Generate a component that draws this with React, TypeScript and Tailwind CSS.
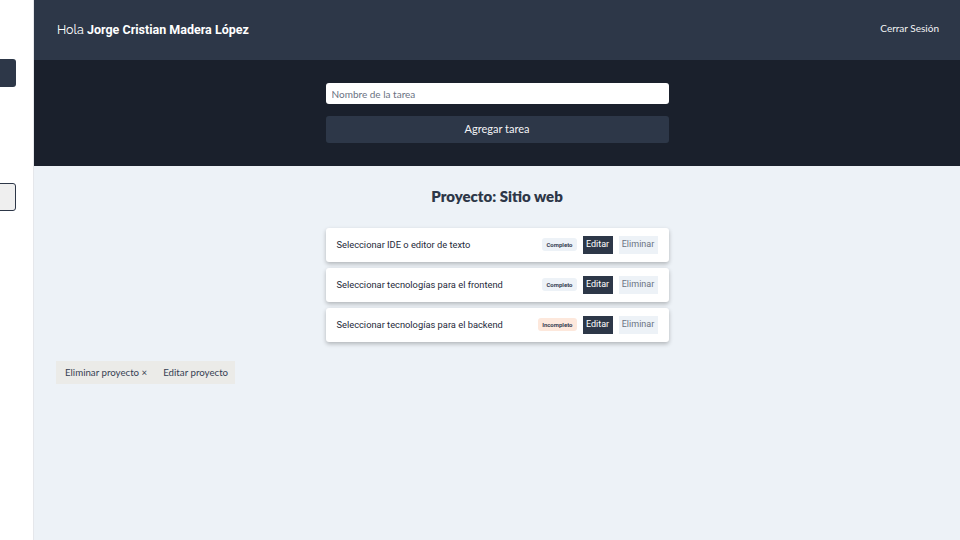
const tasks = [
  { name: "Seleccionar IDE o editor de texto", done: true },
  { name: "Seleccionar tecnologías para el frontend", done: true },
  { name: "Seleccionar tecnologías para el backend", done: false },
]

export default function App() {
  return (
    <div className="flex h-[540px] w-[960px] overflow-hidden bg-white font-['Roboto',sans-serif]">
      {/* sidebar, mostly off-screen */}
      <aside className="relative w-[34px] shrink-0 border-r border-gray-200 bg-white">
        <div className="absolute left-[-80px] top-[59px] h-[28px] w-[96px] rounded-[3px] bg-[#2d3748]" />
        <div className="absolute left-[-80px] top-[183px] h-[28px] w-[96px] rounded-[3px] border border-[#2d3748] bg-[#efefef]" />
      </aside>

      <main className="flex flex-1 flex-col bg-[#edf2f7]">
        <header className="flex h-[60px] items-center justify-between bg-[#2d3748] pl-[23px] pr-[21px] text-white">
          <p className="text-[12.5px]">
            <span className="font-['Raleway','Lato',sans-serif]">Hola </span>
            <span className="font-bold">Jorge Cristian Madera López</span>
          </p>
          <button className="mb-[3px] font-['Lato',sans-serif] text-[10px] text-gray-100">Cerrar Sesión</button>
        </header>

        <section className="flex h-[106px] flex-col items-center bg-[#1a202c] pt-[23px]">
          <input
            className="h-[21px] w-[343px] rounded-[3px] bg-white px-[6px] font-['Lato',sans-serif] text-[10px] text-gray-600 placeholder:text-gray-500 outline-none"
            placeholder="Nombre de la tarea"
          />
          <button className="mt-[12px] h-[27px] w-[343px] rounded-[3px] bg-[#2d3748] font-['Lato',sans-serif] text-[11px] text-gray-100">
            Agregar tarea
          </button>
        </section>

        <section className="flex flex-col items-center pt-[19px]">
          <h1 className="font-['Lato',sans-serif] text-[15px] font-extrabold text-[#2d3748]">Proyecto: Sitio web</h1>
          <ul className="mt-[20px] flex w-[343px] flex-col gap-[6px]">
            {tasks.map((t) => (
              <li
                key={t.name}
                className="flex h-[34px] items-center justify-between rounded-[3px] bg-white pl-[11px] pr-[11px] shadow-[0_2px_4px_rgba(0,0,0,0.25)]"
              >
                <span className="whitespace-nowrap text-[9.3px] text-gray-800">{t.name}</span>
                <div className="flex items-center">
                  <span
                    className={`rounded-[3px] px-[4px] py-[2px] text-[6px] font-bold ${
                      t.done ? "bg-[#edf2f7] text-gray-700" : "bg-[#fde8dc] text-gray-700"
                    }`}
                  >
                    {t.done ? "Completo" : "Incompleto"}
                  </span>
                  <button className="ml-[6px] h-[18px] w-[30px] bg-[#2d3748] text-[9px] text-white">Editar</button>
                  <button className="ml-[6px] h-[18px] w-[39px] bg-[#edf2f7] text-[9px] text-gray-500">
                    Eliminar
                  </button>
                </div>
              </li>
            ))}
          </ul>
        </section>

        <div className="ml-[22px] mt-[19px] flex w-fit items-center bg-[#ebebe8] font-['Lato',sans-serif] text-[9.7px] text-gray-700">
          <button className="h-[23px] px-[9px]">Eliminar proyecto ×</button>
          <button className="h-[23px] px-[7px]">Editar proyecto</button>
        </div>
      </main>
    </div>
  )
}
